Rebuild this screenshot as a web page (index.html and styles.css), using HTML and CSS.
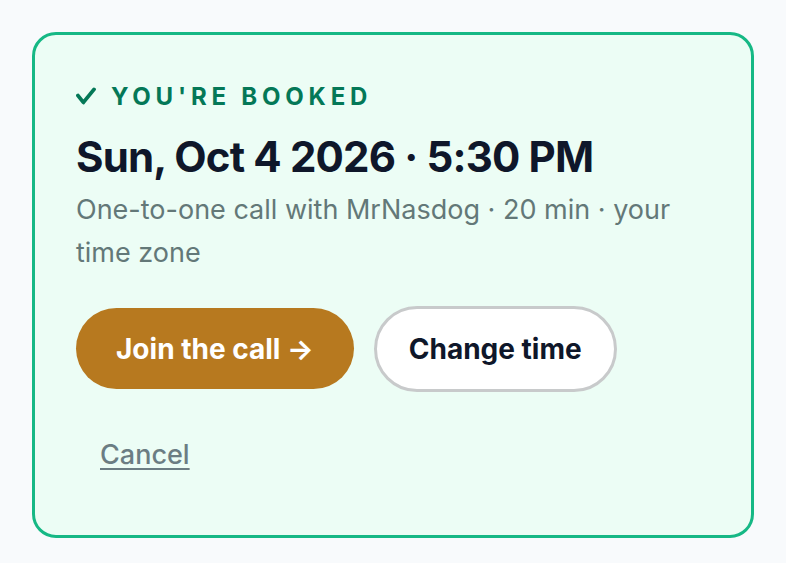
FILE: index.html
```html
<!DOCTYPE html>
<html lang="en">
<head>
<meta charset="utf-8">
<title>Booked</title>
<link rel="stylesheet" href="styles.css">
</head>
<body>
<main class="page">
  <section class="card">
    <div class="label">
      <svg class="check" width="20" height="18" viewBox="0 0 20 18" aria-hidden="true"><polyline points="2,8.6 7.4,15.4 18,2.4" fill="none" stroke="#047857" stroke-width="3.8" stroke-linecap="round" stroke-linejoin="round"/></svg>
      <span>YOU'RE BOOKED</span>
    </div>
    <h1 class="title">Sun, Oct 4 2026 · 5:30 PM</h1>
    <p class="sub">One-to-one call with MrNasdog · 20 min · your time zone</p>
    <div class="actions">
      <button class="btn btn-primary">Join the call →</button>
      <button class="btn btn-secondary">Change time</button>
    </div>
    <div class="cancel-row">
      <button class="cancel">Cancel</button>
    </div>
  </section>
</main>
</body>
</html>
```

FILE: styles.css
```css
html, body {
  margin: 0;
  padding: 0;
  background: #f8fafc;
}
body {
  font-family: Inter, "Noto Sans", sans-serif;
}
.page {
  padding: 32px;
  width: 722px;
}
.card {
  box-sizing: border-box;
  width: 722px;
  height: 506px;
  border: 3px solid #16b885;
  border-radius: 24px;
  background: #ecfdf5;
  padding: 47px 42px 40px 41px;
}
.label {
  display: flex;
  align-items: center;
  gap: 15px;
  font-size: 24px;
  font-weight: 700;
  letter-spacing: 0.2em;
  color: #047857;
  line-height: 1.21;
}
.check {
  flex: none;
  margin-top: -1px;
}
.title {
  margin: 21px 0 0;
  font-size: 42px;
  font-weight: 700;
  letter-spacing: -0.02em;
  color: #0f172a;
  line-height: 1.21;
}
.sub {
  margin: 5px 0 0;
  font-size: 27px;
  line-height: 43px;
  color: #637878;
}
.actions {
  display: flex;
  align-items: center;
  gap: 20px;
  margin-top: 32px;
}
.btn {
  font-family: inherit;
  font-size: 28px;
  font-weight: 700;
  border-radius: 999px;
  cursor: pointer;
}
.btn-primary {
  background: #b7791f;
  color: #ffffff;
  border: 0;
  padding: 0 40px;
  height: 81px;
}
.btn-secondary {
  background: #ffffff;
  color: #0f172a;
  border: 3px solid #c8cacb;
  padding: 0 32px;
  height: 86px;
}
.cancel-row {
  margin-top: 47px;
}
.cancel {
  font-family: inherit;
  background: none;
  border: 0;
  padding: 0 24px;
  font-size: 27px;
  font-weight: 500;
  line-height: 1.21;
  color: #6b7d83;
  text-decoration: underline;
  text-decoration-thickness: 2px;
  text-underline-offset: 4px;
  cursor: pointer;
}
```
